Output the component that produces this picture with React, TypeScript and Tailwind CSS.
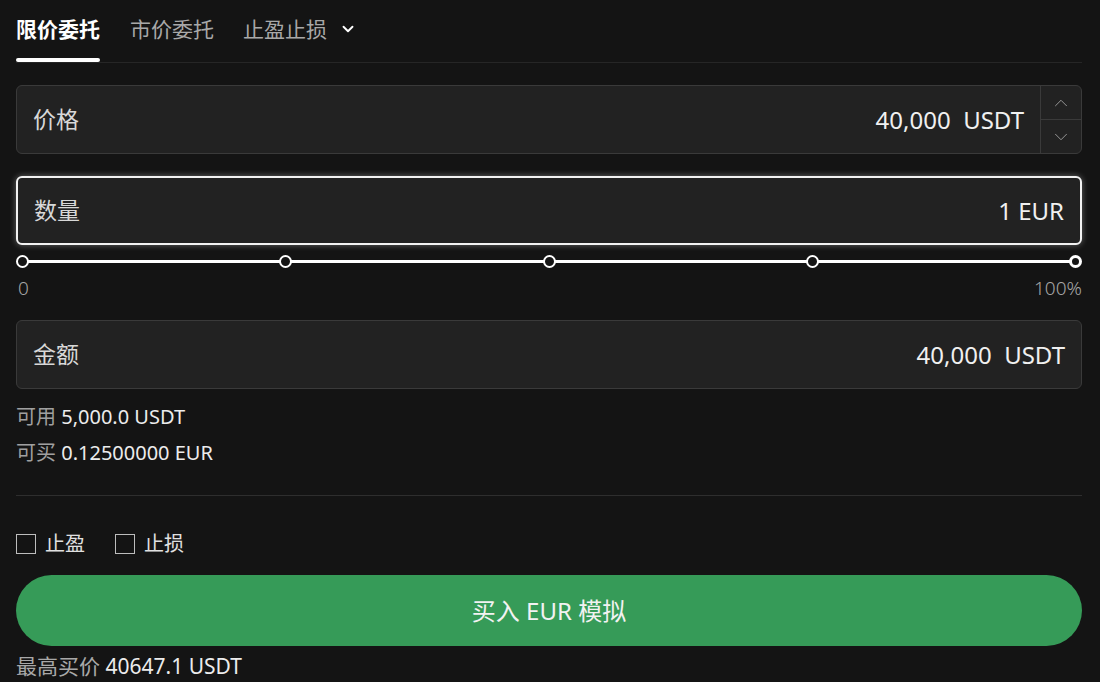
import { ChevronDown, ChevronUp } from "lucide-react";

const font = { fontFamily: '"Noto Sans", "Noto Sans CJK SC", sans-serif' };

function Field({ label, value, active = false, stepper = false }: { label: string; value: string; active?: boolean; stepper?: boolean }) {
  return (
    <div
      className={
        "flex h-[69px] items-stretch rounded-[6px] bg-[#222222] " +
        (active ? "border-2 border-[#f2f2f2] shadow-[0_0_6px_rgba(255,255,255,0.35)]" : "border border-[#3a3a3a]")
      }
    >
      <div className="flex flex-1 items-center justify-between pl-4 pr-4">
        <span className="text-[23px] text-[#d8d8d8]">{label}</span>
        <span className="text-[24px] text-[#f0f0f0] whitespace-pre">{value}</span>
      </div>
      {stepper && (
        <div className="flex w-[41px] flex-col border-l border-[#3a3a3a]">
          <div className="flex flex-1 items-center justify-center border-b border-[#3a3a3a] text-[#a0a0a0]">
            <ChevronUp size={22} strokeWidth={1} />
          </div>
          <div className="flex flex-1 items-center justify-center text-[#a0a0a0]">
            <ChevronDown size={22} strokeWidth={1} />
          </div>
        </div>
      )}
    </div>
  );
}

function Dot({ last = false }: { last?: boolean }) {
  return (
    <span
      className={
        "h-[13px] w-[13px] rounded-full bg-[#151515] " + (last ? "border-[3px] border-white" : "border-2 border-white")
      }
    />
  );
}

export default function App() {
  return (
    <div style={font} className="h-[682px] w-[1100px] overflow-hidden bg-[#141414] pl-4 pr-[18px] text-white">
      {/* tabs */}
      <div className="flex items-end border-b border-[#262626] pt-[14px]">
        <div className="flex flex-col">
          <span className="text-[21px] font-bold leading-[30px] text-white">限价委托</span>
          <span className="mt-[14px] h-[4px] w-full rounded-full bg-white" />
        </div>
        <span className="ml-[30px] mb-[18px] text-[21px] leading-[30px] text-[#a8a8a8]">市价委托</span>
        <span className="ml-[29px] mb-[18px] flex items-center gap-[12px] text-[21px] leading-[30px] text-[#a8a8a8]">
          止盈止损
          <ChevronDown size={18} strokeWidth={2.5} className="text-white" />
        </span>
      </div>

      <div className="mt-[22px]">
        <Field label="价格" value="40,000  USDT" stepper />
      </div>
      <div className="mt-[22px]">
        <Field label="数量" value="1 EUR" active />
      </div>

      {/* slider */}
      <div className="relative mt-[10px] flex h-[13px] items-center">
        <div className="absolute left-[6px] right-[6px] top-[5px] h-[3px] bg-white" />
        <span className="relative z-10 flex w-full justify-between">
          <Dot />
          <Dot />
          <Dot />
          <Dot />
          <Dot last />
        </span>
      </div>
      <div className="mt-[8px] flex justify-between text-[19px] font-light leading-[24px] text-[#a6a6a6]">
        <span className="pl-[2px]">0</span>
        <span>100%</span>
      </div>

      <div className="mt-[20px]">
        <Field label="金额" value="40,000  USDT" />
      </div>

      <div className="mt-[16px] text-[20px] leading-[24px]">
        <div>
          <span className="text-[#a0a0a0]">可用</span> <span className="text-[#ececec]">5,000.0 USDT</span>
        </div>
        <div className="mt-[12px]">
          <span className="text-[#a0a0a0]">可买</span> <span className="text-[#ececec]">0.12500000 EUR</span>
        </div>
      </div>

      <div className="mt-[30px] h-px bg-[#2e2e2e]" />

      <div className="mt-[35px] flex items-center text-[20px] leading-[26px] text-[#e0e0e0]">
        <span className="h-[20px] w-[20px] border border-[#bdbdbd]" />
        <span className="ml-[9px]">止盈</span>
        <span className="ml-[30px] h-[20px] w-[20px] border border-[#bdbdbd]" />
        <span className="ml-[9px]">止损</span>
      </div>

      <button className="mt-[18px] flex h-[71px] w-full items-center justify-center rounded-full bg-[#369b58] text-[24px] text-[#f2f2f2]">
        买入 EUR 模拟
      </button>

      <div className="mt-[7px] text-[21px] leading-[26px]">
        <span className="text-[#a8a8a8]">最高买价</span> <span className="text-[#ececec]">40647.1 USDT</span>
      </div>
    </div>
  );
}
